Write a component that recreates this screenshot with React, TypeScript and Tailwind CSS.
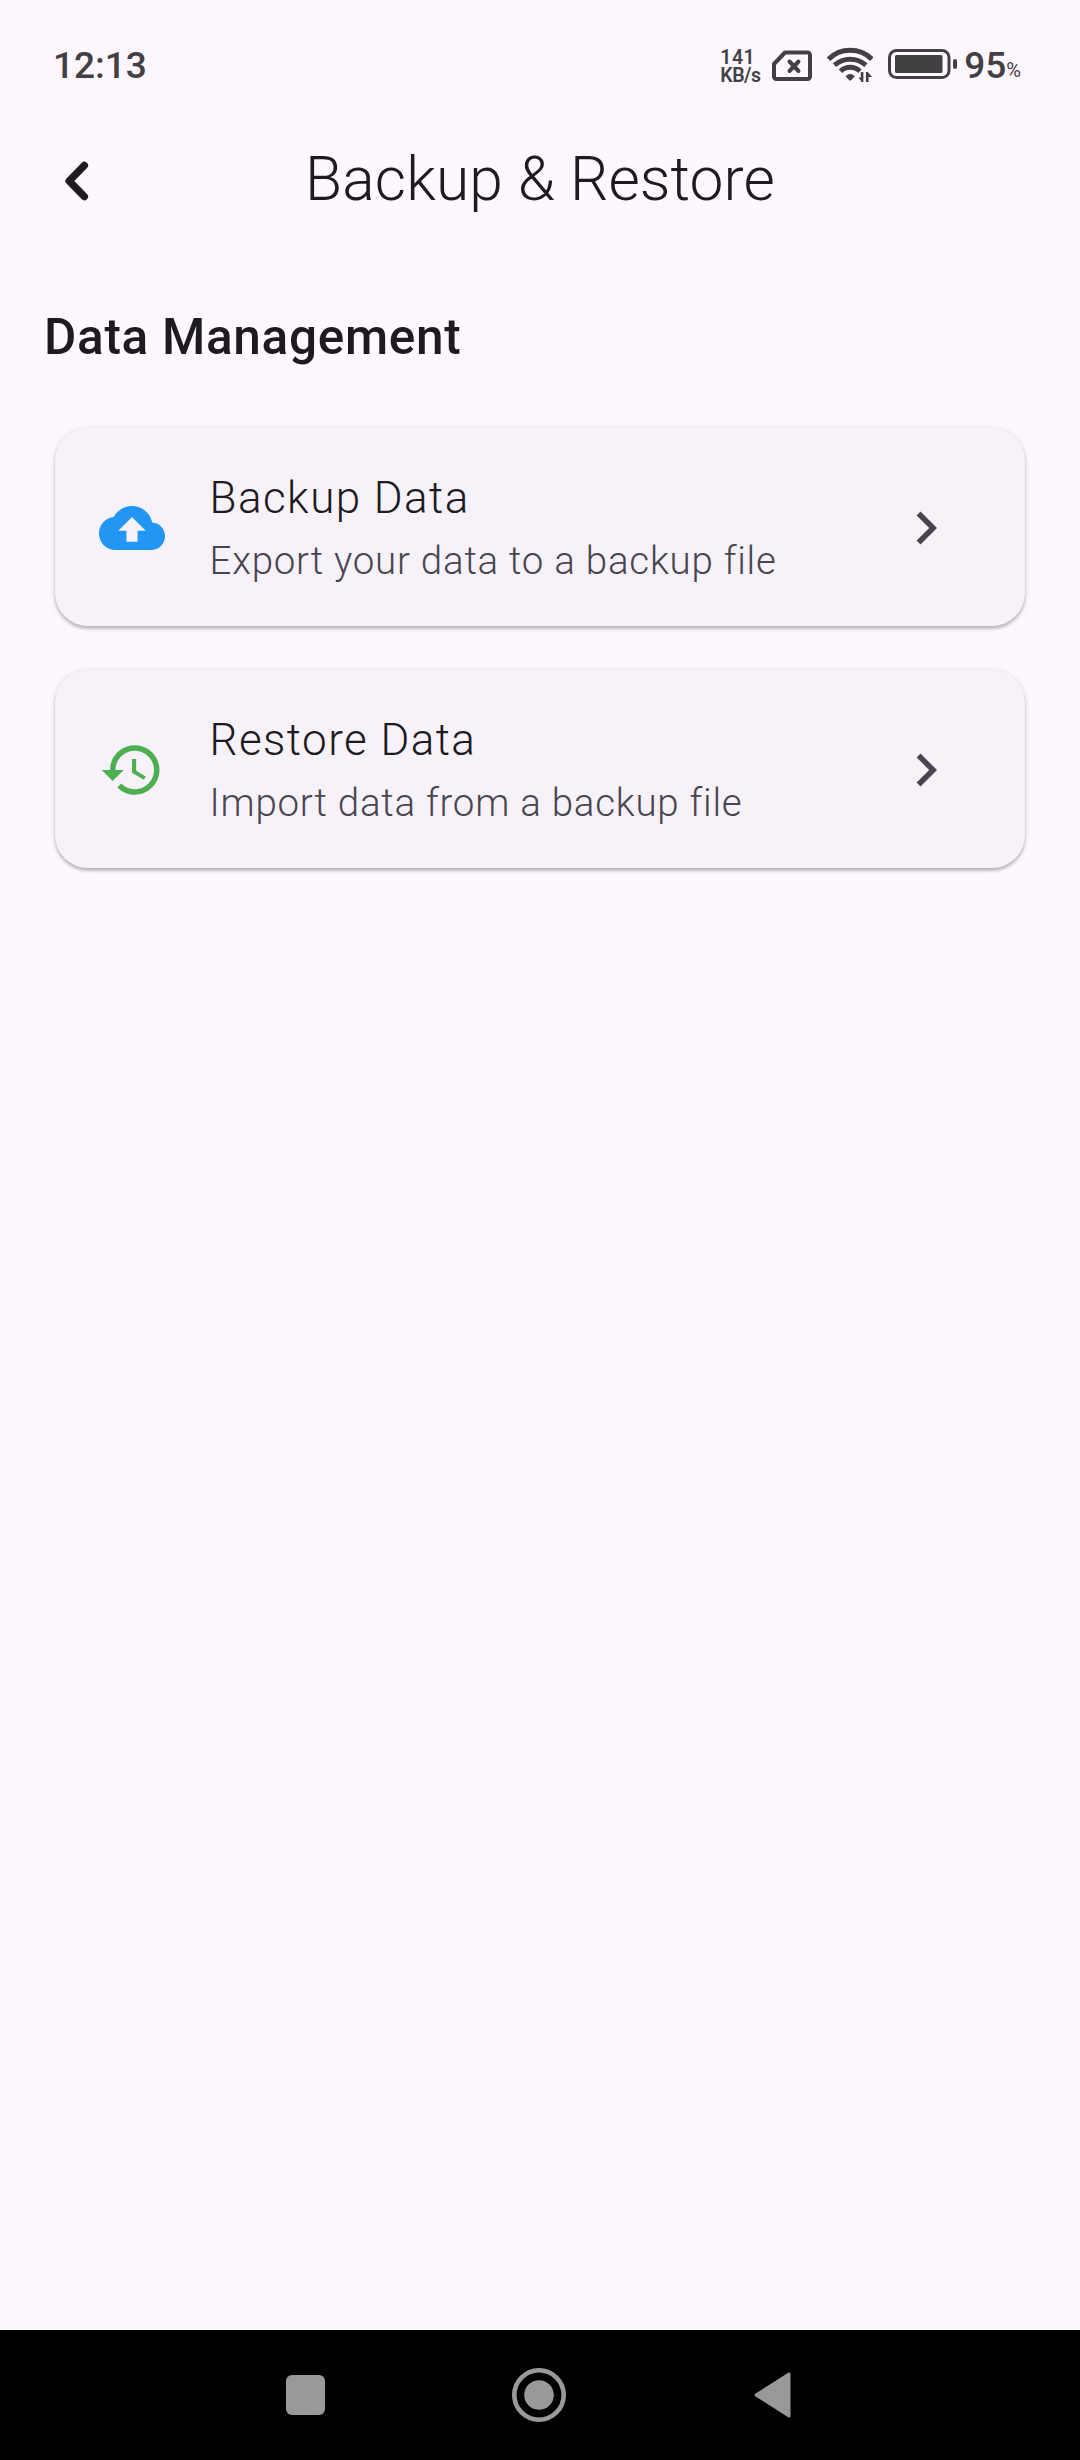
import type { ReactNode } from "react";

function StatusBar() {
  return (
    <div className="flex h-[130px] items-center justify-between pl-[53px] pr-[59px] text-[#434044]">
      <span className="mt-[2px] text-[37px] font-medium leading-[44px]">12:13</span>
      <div className="flex h-[44px] items-center">
        <div className="mr-[11px] mt-[4px] w-[41px] whitespace-nowrap text-[19.5px] font-semibold leading-[18.5px]">
          <div className="tracking-[0.5px]">141</div>
          <div className="tracking-[-0.5px]">KB/s</div>
        </div>
        <svg className="mr-[14px] mt-px h-[32px] w-[41px]" viewBox="0 0 41 32" fill="none" stroke="currentColor" strokeWidth="4" strokeLinejoin="round" strokeLinecap="round">
          <path d="M13 2.500H35.500a2.500 2.500 0 0 1 2.500 2.500V26.500a2.500 2.500 0 0 1-2.500 2.500H4.500a2.500 2.500 0 0 1-2.500-2.500V14Z" />
          <path d="M17.500 11.500l9 9.500M26.500 11.500l-9 9.500" />
        </svg>
        <svg className="mr-[15px] h-[36px] w-[46px]" viewBox="0 0 46 36" fill="none" stroke="currentColor" strokeWidth="5">
          <path d="M1.500 12.200A30.800 30.800 0 0 1 44.900 12.200" />
          <path d="M7.500 18.200A23.500 23.500 0 0 1 38.900 18.200" />
          <path d="M13.500 24.200A14 14 0 0 1 32.900 24.200" />
          <path d="M18.500 29.200Q23.200 24.800 27.900 29.200L24.400 33Q23.200 34 22 33Z" fill="currentColor" stroke="none" />
          <path d="M36.400 25v10h-1.800l-3-4.500h2.200V25ZM38.900 35V25h1.800l4.300 5h-3.400v5Z" fill="currentColor" stroke="none" />
        </svg>
        <svg className="mr-[6px] mt-[-3px] h-[30px] w-[70px]" viewBox="0 0 70 30" fill="none">
          <rect x="1.500" y="1.500" width="59.500" height="27" rx="7" stroke="currentColor" strokeWidth="3" />
          <rect x="7" y="6" width="47.500" height="18" rx="1.500" fill="currentColor" />
          <rect x="65" y="10" width="4" height="10" rx="2" fill="currentColor" />
        </svg>
        <div className="mt-[2px] flex items-baseline">
          <span className="text-[37px] font-medium leading-[44px]">95</span>
          <span className="-translate-y-px text-[20px]">%</span>
        </div>
      </div>
    </div>
  );
}

function Header() {
  return (
    <header className="grid h-[110px] grid-cols-[154px_1fr_154px] items-center text-[#1d1b20]">
      <svg className="ml-[55px] mt-[-9px] h-[44px] w-[44px]" viewBox="0 0 44 44" fill="none" stroke="currentColor" strokeWidth="7.500" strokeLinecap="round" strokeLinejoin="round">
        <path d="M29.300 6.500L14.200 22L29.300 37.500" />
      </svg>
      <h1 className="-mt-[12px] text-center text-[60.5px] font-light leading-[77px] tracking-[0.1px]">Backup &amp; Restore</h1>
    </header>
  );
}

function ActionCard({ icon, title, subtitle }: { icon: ReactNode; title: string; subtitle: string }) {
  return (
    <div className="flex h-[198px] items-center rounded-[33px] bg-[#f7f2fa] pl-[44px] pr-[66px] shadow-[0_2.75px_3px_0_rgba(0,0,0,0.20),0_1px_6px_0_rgba(0,0,0,0.12)]">
      {icon}
      <div className="ml-[44.5px] flex-1">
        <div className="text-[44px] font-light leading-[62px] tracking-[1.45px] text-[#1d1b20]">{title}</div>
        <div className="pt-[4px] text-[38.5px] font-light leading-[55px] tracking-[0.75px] text-[#49454f]">{subtitle}</div>
      </div>
      <svg className="mt-[2px] h-[66px] w-[66px] text-[#49454f]" viewBox="0 0 24 24" fill="currentColor">
        <path d="M10 6 8.590 7.410 13.170 12l-4.580 4.590L10 18l6-6z" />
      </svg>
    </div>
  );
}

function NavBar() {
  return (
    <nav className="flex h-[130px] items-center bg-black text-[#999]">
      <div className="ml-[286px] h-[40px] w-[39px] rounded-[6px] bg-[#999]" />
      <svg className="ml-[187px] h-[54px] w-[54px]" viewBox="0 0 54 54">
        <circle cx="27" cy="27" r="24.700" fill="none" stroke="currentColor" strokeWidth="4.600" />
        <circle cx="27" cy="27" r="14.800" fill="currentColor" />
      </svg>
      <svg className="ml-[188px] h-[46px] w-[37px]" viewBox="0 0 37 46">
        <path d="M2 23L35 2V44Z" fill="currentColor" stroke="currentColor" strokeWidth="3" strokeLinejoin="round" />
      </svg>
    </nav>
  );
}

export default function App() {
  return (
    <div className="flex h-[2460px] w-[1080px] flex-col overflow-hidden bg-[#fef7ff] font-['Roboto',sans-serif]">
      <StatusBar />
      <Header />
      <main className="flex-1">
        <h2 className="mt-[64px] pl-[44px] text-[49.5px] font-medium leading-[66px] tracking-[0.7px] text-[#1d1b20]">Data Management</h2>
        <div className="mx-[55px] mt-[58px] flex flex-col gap-[44px]">
          <ActionCard
            title="Backup Data"
            subtitle="Export your data to a backup file"
            icon={
              <svg className="mt-[2px] h-[66px] w-[66px] text-[#2196f3]" viewBox="0 0 24 24" fill="currentColor">
                <path d="M19.350 10.040C18.670 6.590 15.640 4 12 4 9.110 4 6.600 5.640 5.350 8.040 2.340 8.360 0 10.910 0 14c0 3.310 2.690 6 6 6h13c2.760 0 5-2.240 5-5 0-2.640-2.050-4.780-4.650-4.960zM14 13v4h-4v-4H7l5-5 5 5h-3z" />
              </svg>
            }
          />
          <ActionCard
            title="Restore Data"
            subtitle="Import data from a backup file"
            icon={
              <svg className="mt-[2px] h-[66px] w-[66px] text-[#4caf50]" viewBox="0 0 24 24" fill="currentColor">
                <path d="M13 3c-4.970 0-9 4.030-9 9H1l3.890 3.890.070.140L9 12H6c0-3.870 3.130-7 7-7s7 3.130 7 7-3.130 7-7 7c-1.930 0-3.680-.790-4.940-2.060l-1.420 1.420C8.270 19.990 10.510 21 13 21c4.970 0 9-4.030 9-9s-4.030-9-9-9zm-1 5v5l4.280 2.540.720-1.210-3.500-2.080V8H12z" />
              </svg>
            }
          />
        </div>
      </main>
      <NavBar />
    </div>
  );
}
